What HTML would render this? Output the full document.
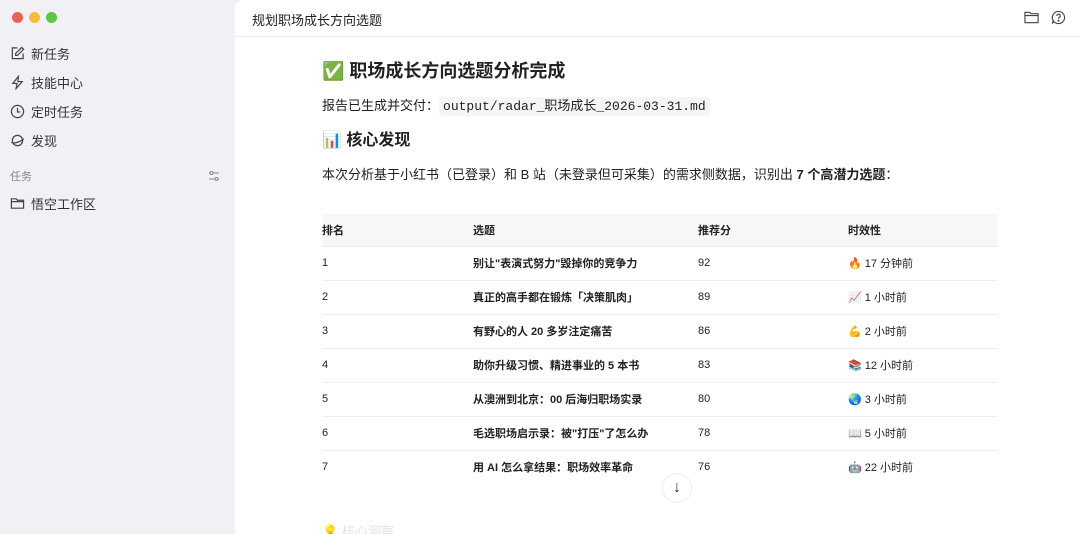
<!DOCTYPE html>
<html><head><meta charset="utf-8"><style>
*{margin:0;padding:0;box-sizing:border-box}
html,body{width:1080px;height:534px;overflow:hidden}
body{font-family:"Liberation Sans","Noto Sans CJK SC",sans-serif;color:#222;background:#f1f1f5;position:relative}
.side{position:absolute;left:0;top:0;width:235px;height:534px;background:#f1f1f5}
.dot{position:absolute;top:12px;width:11px;height:11px;border-radius:50%}
.nav{position:absolute;left:10px;font-size:13px;color:#333;display:flex;align-items:center}
.nav svg{width:15px;height:15px;margin-right:6px}
.main{position:absolute;left:235px;top:0;width:845px;height:534px;background:#fff;border-top-left-radius:8px}
.hdr{position:absolute;left:0;top:0;width:845px;height:37px;border-bottom:1px solid #eee;font-size:13px;padding:10px 0 0 17px}
.c{position:absolute;left:87px}
h1{font-size:18px;font-weight:bold;position:absolute;left:87px;top:57px}
h2{font-size:16px;font-weight:bold;position:absolute;left:87px;top:126px}
code{font-family:"Liberation Mono","Noto Sans CJK SC",monospace;background:#f5f5f5;padding:2px 4px;border-radius:4px;font-size:13px}
table{position:absolute;left:87px;top:214px;width:676px;border-collapse:collapse;font-size:11px}
th{background:#f7f7f7;height:32px;text-align:left;font-weight:bold}
td{height:34px;border-top:1px solid #eee;vertical-align:middle}
td:nth-child(2){font-weight:bold}
</style></head><body>
<div class="side">
<div class="dot" style="left:12px;background:#ee5f57"></div>
<div class="dot" style="left:29px;background:#f6bd3b"></div>
<div class="dot" style="left:46px;background:#5dc748"></div>
<div class="nav" style="top:44px"><svg viewBox="0 0 16 16" fill="none" stroke="#444" stroke-width="1.3"><path d="M8 2H2.5v11.5H14V8"/><path d="M12.5 1.5l2 2L8 10H6V8z"/></svg>新任务</div>
<div class="nav" style="top:73px"><svg viewBox="0 0 16 16" fill="none" stroke="#444" stroke-width="1.3"><path d="M9 1.5L3 9h4.5L6.5 14.5 13 7H8.5z"/></svg>技能中心</div>
<div class="nav" style="top:102px"><svg viewBox="0 0 16 16" fill="none" stroke="#444" stroke-width="1.3"><circle cx="8" cy="8" r="6.5"/><path d="M8 4v4.5h3"/></svg>定时任务</div>
<div class="nav" style="top:131px"><svg viewBox="0 0 16 16" fill="none" stroke="#444" stroke-width="1.3"><circle cx="8" cy="8" r="5.5"/><path d="M1.5 10c2 2 11 -1 13-4"/></svg>发现</div>
<div class="nav" style="top:168px;font-size:11px;color:#888">任务</div>
<svg style="position:absolute;left:208px;top:170px" width="12" height="12" viewBox="0 0 12 12" fill="none" stroke="#888"><path d="M1 3h10M1 9h10"/><circle cx="3.5" cy="3" r="1.5" fill="#f1f1f5"/><circle cx="8.5" cy="9" r="1.5" fill="#f1f1f5"/></svg>
<div class="nav" style="top:194px"><svg viewBox="0 0 16 16" fill="none" stroke="#444" stroke-width="1.3"><path d="M1.5 3h5l1.5 1.5h6.5v8.5h-13z M1.5 6h13"/></svg>悟空工作区</div>
</div>
<div class="main">
<div class="hdr">规划职场成长方向选题</div>
<svg style="position:absolute;left:789px;top:10px" width="15" height="14" viewBox="0 0 16 14" fill="none" stroke="#444" stroke-width="1.2"><path d="M1 2h5l1.5 1.5H15V13H1z M1 5.5h14"/></svg>
<svg style="position:absolute;left:816px;top:10px" width="15" height="15" viewBox="0 0 16 16" fill="none" stroke="#444" stroke-width="1.2"><path d="M8 1.5a6.5 6.5 0 1 1-5 10.7L1.5 14.5l.8-3.3A6.5 6.5 0 0 1 8 1.5z"/><path d="M6.2 6.3a1.8 1.8 0 1 1 2.5 1.6c-.6.3-.7.7-.7 1.3"/><circle cx="8" cy="11.3" r=".5" fill="#444"/></svg>
<h1>✅ 职场成长方向选题分析完成</h1>
<div class="c" style="top:95px;font-size:13px">报告已生成并交付：<code>output/radar_职场成长_2026-03-31.md</code></div>
<h2>📊 核心发现</h2>
<div class="c" style="top:164px;font-size:13px">本次分析基于小红书（已登录）和 B 站（未登录但可采集）的需求侧数据，识别出 <b>7 个高潜力选题</b>：</div>
<table>
<tr><th style="width:151px">排名</th><th style="width:225px">选题</th><th style="width:150px">推荐分</th><th>时效性</th></tr>
<tr><td>1</td><td>别让"表演式努力"毁掉你的竞争力</td><td>92</td><td>🔥 17 分钟前</td></tr>
<tr><td>2</td><td>真正的高手都在锻炼「决策肌肉」</td><td>89</td><td>📈 1 小时前</td></tr>
<tr><td>3</td><td>有野心的人 20 多岁注定痛苦</td><td>86</td><td>💪 2 小时前</td></tr>
<tr><td>4</td><td>助你升级习惯、精进事业的 5 本书</td><td>83</td><td>📚 12 小时前</td></tr>
<tr><td>5</td><td>从澳洲到北京：00 后海归职场实录</td><td>80</td><td>🌏 3 小时前</td></tr>
<tr><td>6</td><td>毛选职场启示录：被"打压"了怎么办</td><td>78</td><td>📖 5 小时前</td></tr>
<tr><td>7</td><td>用 AI 怎么拿结果：职场效率革命</td><td>76</td><td>🤖 22 小时前</td></tr>
</table>
<div style="position:absolute;left:427px;top:473px;width:30px;height:30px;border-radius:50%;border:1px solid #eee;background:#fff;text-align:center;line-height:28px;font-size:16px;color:#333">↓</div>
<div class="c" style="top:521px;font-size:13px;color:#e4e4e4">💡 核心洞察</div>
</div>
</body></html>
